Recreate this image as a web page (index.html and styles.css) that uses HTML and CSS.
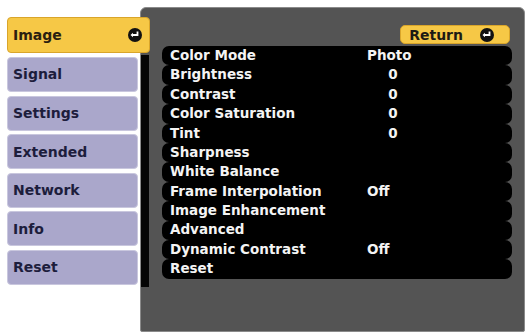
FILE: index.html
```html
<!DOCTYPE html>
<html>

<head>
    <title>Image Menu</title>
    <link rel="stylesheet" href="styles.css">
</head>

<body>
    <div class="osd">
        <ul class="tabs">
            <li class="tab active">Image
                <svg class="enter" viewBox="-7 -7 14 14">
                    <circle r="7" fill="#111" />
                    <path d="M 2.5 -3.5 v 3.5 h -5" stroke="white" stroke-width="1.8" fill="none" />
                    <path d="M -4.5 0 l 2.5 -2.3 v 4.6 z" fill="white" />
                </svg>
            </li>
            <li class="tab">Signal</li>
            <li class="tab">Settings</li>
            <li class="tab">Extended</li>
            <li class="tab">Network</li>
            <li class="tab">Info</li>
            <li class="tab">Reset</li>
        </ul>
        <div class="panel">
            <div class="edge"></div>
            <div class="content">
                <div class="toolbar">
                    <div class="return">Return
                        <svg class="enter" viewBox="-7 -7 14 14">
                            <circle r="7" fill="#111" />
                            <path d="M 2.5 -3.5 v 3.5 h -5" stroke="white" stroke-width="1.8" fill="none" />
                            <path d="M -4.5 0 l 2.5 -2.3 v 4.6 z" fill="white" />
                        </svg>
                    </div>
                </div>
                <ul class="items">
                    <li class="item"><span class="label">Color Mode</span><span class="value">Photo</span></li>
                    <li class="item"><span class="label">Brightness</span><span class="value num">0</span></li>
                    <li class="item"><span class="label">Contrast</span><span class="value num">0</span></li>
                    <li class="item"><span class="label">Color Saturation</span><span class="value num">0</span></li>
                    <li class="item"><span class="label">Tint</span><span class="value num">0</span></li>
                    <li class="item"><span class="label">Sharpness</span></li>
                    <li class="item"><span class="label">White Balance</span></li>
                    <li class="item"><span class="label">Frame Interpolation</span><span class="value">Off</span></li>
                    <li class="item"><span class="label">Image Enhancement</span></li>
                    <li class="item"><span class="label">Advanced</span></li>
                    <li class="item"><span class="label">Dynamic Contrast</span><span class="value">Off</span></li>
                    <li class="item"><span class="label">Reset</span></li>
                </ul>
            </div>
        </div>
    </div>
</body>

</html>
```

FILE: styles.css
```css
html,
body {
    margin: 0;
    padding: 0;
    background-color: white;
}

body {
    font-family: "DejaVu Sans", Verdana, sans-serif;
    font-weight: bold;
}

ul {
    list-style: none;
    margin: 0;
    padding: 0;
}

.osd {
    display: flex;
    padding: 7px 4px 0 0;
}

.tabs {
    width: 140px;
    flex: none;
    padding: 10px 0 0 7px;
    box-sizing: border-box;
    display: flex;
    flex-direction: column;
    gap: 3.6px;
    position: relative;
    z-index: 1;
}

.tab {
    height: 35px;
    flex: none;
    box-sizing: border-box;
    display: flex;
    align-items: center;
    justify-content: space-between;
    padding: 0 7px 0 5px;
    font-size: 14px;
    color: #1d1d3c;
    background-color: #aaa7cb;
    border: 1px solid #c9c7de;
    border-radius: 4px;
    width: 131px;
}

.tab.active {
    width: 143px;
    height: 36px;
    margin-bottom: 0.4px;
    background-color: #f6c846;
    border-color: #d9a52a;
    color: #2a2010;
}

.enter {
    width: 14px;
    height: 14px;
}

.panel {
    flex: 1;
    height: 325px;
    display: flex;
    background-color: #545454;
    border: 1px solid #8a8a8a;
    border-radius: 6px 6px 2px 2px;
    box-sizing: border-box;
}

.edge {
    width: 8px;
    height: 232px;
    margin-top: 47px;
    background-color: #050505;
}

.content {
    flex: 1;
    padding: 17px 12px 0 13px;
}

.toolbar {
    display: flex;
    justify-content: flex-end;
    padding-right: 2px;
}

.return {
    width: 110px;
    height: 19px;
    box-sizing: border-box;
    display: flex;
    align-items: center;
    justify-content: flex-end;
    gap: 17px;
    padding-right: 15px;
    font-size: 14px;
    color: #1d1a14;
    background-color: #f6c846;
    border: 1px solid #d9a52a;
    border-radius: 5px;
}

.items {
    margin-top: 2px;
}

.item {
    height: 19.4px;
    display: flex;
    align-items: center;
    background-color: #000;
    border-radius: 7px;
    padding-left: 8px;
    font-size: 13.5px;
    color: #f4f4f4;
    line-height: 1;
}

.label {
    width: 197px;
}

.value.num {
    width: 52px;
    text-align: center;
}
```
